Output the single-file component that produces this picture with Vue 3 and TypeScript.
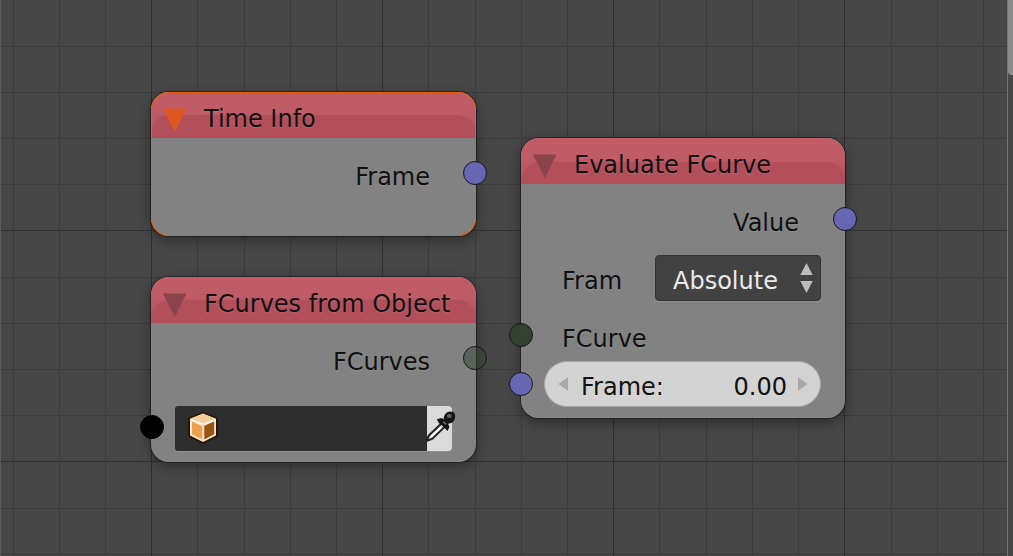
<script setup lang="ts">
interface GridLine {
  at: number
  major: boolean
}

const columns: GridLine[] = [13, 59, 105, 151, 197, 244, 290, 336, 382, 428, 475, 521, 567, 613, 659, 706, 752, 798, 844, 891, 937, 983]
  .map((at, i) => ({ at, major: i % 5 === 3 }))
const rows: GridLine[] = [46, 92, 138, 184, 230, 277, 323, 369, 415, 461, 508, 554]
  .map((at, i) => ({ at, major: i % 5 === 4 }))
</script>

<template>
  <main class="editor">
    <svg class="grid" width="1013" height="556" shape-rendering="crispEdges">
      <rect v-for="r in rows" :key="'r' + r.at" x="0" :y="r.at" width="1013" height="1" :class="{ major: r.major }" />
      <rect v-for="c in columns" :key="'c' + c.at" :x="c.at" y="0" width="1" height="556" :class="{ major: c.major }" />
    </svg>

    <section class="node time selected">
      <header>
        <svg class="fold" viewBox="0 0 24 24"><path d="M0 0.5H23.5L11.8 24Z" /></svg>
        <h2>Time Info</h2>
      </header>
      <p class="output">Frame</p>
      <i class="socket number right"></i>
    </section>

    <section class="node curves">
      <header>
        <svg class="fold" viewBox="0 0 24 24"><path d="M0 0.5H23.5L11.8 24Z" /></svg>
        <h2>FCurves from Object</h2>
      </header>
      <p class="output">FCurves</p>
      <div class="object-field">
        <div class="object-name">
          <svg class="cube" width="32" height="34" viewBox="0 0 32 34">
            <path d="M16 1L31 6.8V25.5L16 33L1 25.5V6.8Z" fill="#2a1503" />
            <path d="M16 2.6L29 7.7V24.4L16 31L3 24.4V7.7Z" fill="#fbe8d2" />
            <path d="M16 3L28 7.5L16 12.6L4 7.5Z" fill="#f5c998" />
            <path d="M5 10.6L15 14.9V28.2L5 23.2Z" fill="#eda04c" />
            <path d="M17.3 14.8L27.2 10.6V23.3L17.3 28.6Z" fill="#965612" />
            <path d="M4 8.6L16 13.6L28 8.6" fill="none" stroke="#fff6ea" stroke-width="1.6" />
            <path d="M16 13V30" stroke="#f7d6b2" stroke-width="1.5" />
          </svg>
        </div>
        <div class="picker">
          <svg class="dropper" width="32" height="34" viewBox="0 0 32 34">
            <path d="M18.2 12.8L5.1 25.2L2.2 31L8.2 28.7L21.3 16Z" fill="#e9e9e9" stroke="#242424" stroke-width="2.2" stroke-linejoin="round" />
            <path d="M17.2 17.3L7 27" stroke="#fff" stroke-width="2" />
            <path d="M12.8 9.2L17.5 8L19.6 9.6C19.8 4.6 22.5 1.6 26.5 1.6C30.5 1.6 32 5 30.8 8.8C29.7 12.4 27 13.4 24.1 13.8L25.4 17L23.5 21L19.4 16.8L14.8 13Z" fill="#151515" />
            <path d="M19.5 11.8L22 14.2" stroke="#777" stroke-width="1.5" />
            <ellipse cx="25.3" cy="6" rx="2.4" ry="2" fill="#666" />
          </svg>
        </div>
      </div>
      <i class="socket curve-out right"></i>
      <i class="socket object left"></i>
    </section>

    <section class="node evaluate">
      <header>
        <svg class="fold" viewBox="0 0 24 24"><path d="M0 0.5H23.5L11.8 24Z" /></svg>
        <h2>Evaluate FCurve</h2>
      </header>
      <p class="output">Value</p>
      <div class="option">
        <span>Fram</span>
        <div class="select">
          <span>Absolute</span>
          <svg width="13" height="30" viewBox="0 0 13 30"><path d="M0.3 12H12.7L6.5 0ZM0.3 18H12.7L6.5 30Z" /></svg>
        </div>
      </div>
      <p class="input">FCurve</p>
      <div class="slider">
        <svg width="10" height="14" viewBox="0 0 10 14"><path d="M10 0V14L0.5 7Z" /></svg>
        <span>Frame:</span>
        <span class="value">0.00</span>
        <svg width="10" height="14" viewBox="0 0 10 14"><path d="M0 0V14L9.5 7Z" /></svg>
      </div>
      <i class="socket number right"></i>
      <i class="socket curve-in left"></i>
      <i class="socket number frame-in left"></i>
    </section>

    <aside class="scrollbar"><div class="thumb"></div></aside>
  </main>
</template>

<style>
html, body { margin: 0; overflow: hidden; background: #474747; }
</style>

<style scoped>
.editor {
  position: relative;
  width: 1013px;
  height: 556px;
  overflow: hidden;
  box-sizing: border-box;
  border-left: 1px solid #5b5b5b;
  background: #474747;
  color: #111;
  font: 24px/28px "DejaVu Sans", sans-serif;
}
.grid { position: absolute; left: -1px; top: 0; fill: #3c3c3c; }
.grid .major { fill: #303030; }
.node {
  position: absolute;
  width: 325px;
  box-sizing: border-box;
  border-radius: 18px;
  background: rgba(132, 132, 132, 0.975);
  box-shadow: 0 0 0 1px rgba(20, 20, 20, 0.6), 0 4px 12px 1px rgba(0, 0, 0, 0.34);
  text-shadow: 0 1px 2px rgba(255, 255, 255, 0.12);
}
.time { left: 150px; top: 92px; height: 144px; }
.curves { left: 150px; top: 277px; height: 185px; }
.evaluate { left: 520px; top: 138px; width: 324px; height: 280px; }
.node::after {
  content: "";
  position: absolute;
  inset: 0;
  border-radius: 18px;
  box-shadow: inset 0 -1px 0 rgba(255, 255, 255, 0.08);
  pointer-events: none;
}
.selected::after { box-shadow: inset 0 0 0 1px #ee6008; }
header {
  position: relative;
  display: flex;
  height: 46px;
  border-radius: 18px 18px 0 0;
  background: linear-gradient(rgba(193, 91, 102, 0.97) 40%, #b6525d 85%);
  overflow: hidden;
}
header::before {
  content: "";
  position: absolute;
  inset: 23px 0 0;
  border-radius: 19px 19px 0 0;
  background: #b34f5a;
}
.evaluate header::before { top: 24px; }
.fold { position: relative; flex: none; width: 24px; height: 24px; margin: 16px 0 0 12px; fill: #8b444b; }
.selected .fold { fill: #df571e; }
h2 { position: relative; margin: 13px 0 0 17px; font-size: 24px; font-weight: 400; line-height: 28px; white-space: nowrap; }
p { margin: 0; }
.output { margin-top: 25px; padding-right: 46px; text-align: right; }
.object-field { display: flex; width: 277px; height: 45px; margin: 30px 0 0 24px; border-radius: 3px; box-shadow: 0 1px 0 #929292; }
.object-name { width: 252px; border-radius: 3px 0 0 3px; background: #2e2e2e; }
.cube { display: block; margin: 5px 0 0 12px; }
.picker { width: 25px; border-radius: 0 4px 4px 0; background: #dadada; }
.dropper { display: block; margin: 4px 0 0 -3px; }
.option { display: flex; align-items: center; justify-content: space-between; height: 46px; margin: 18px 24px 0 41px; }
.option span { padding-top: 6px; }
.select {
  display: flex;
  align-items: center;
  justify-content: space-between;
  box-sizing: border-box;
  width: 166px;
  height: 46px;
  padding: 0 7px 0 17px;
  border: 1px solid #333;
  border-radius: 4px;
  background: #424242;
  color: #e9e9e9;
  box-shadow: 0 1px 0 #929292;
  fill: #bcbcbc;
  text-shadow: none;
}
.input { margin: 24px 0 0 41px; }
.slider {
  display: flex;
  align-items: center;
  box-sizing: border-box;
  width: 277px;
  height: 46px;
  margin: 8px 0 0 23px;
  padding: 0 12px 0 13px;
  border: 1px solid #a8a8a8;
  border-radius: 23px;
  background: #d3d3d3;
  fill: #a8a8a8;
}
.slider span { margin-left: 13px; padding-top: 6px; }
.slider .value { margin: 0 11px 0 auto; }
.socket {
  position: absolute;
  z-index: 1;
  width: 24px;
  height: 24px;
  box-sizing: border-box;
  border: 1px solid #18181c;
  border-radius: 50%;
}
.right { right: -11px; top: 69px; }
.evaluate .right { right: -12px; }
.left { left: -11px; }
.evaluate .left { left: -12px; }
.number { background: #6766b2; }
.object { top: 138px; background: #000; border-color: #000; }
.curve-out { background: rgba(50, 65, 48, 0.5); }
.curve-in { top: 185px; background: #334130; }
.frame-in { top: 234px; }
.scrollbar { position: absolute; z-index: 2; right: 0; top: 0; width: 6px; height: 556px; box-sizing: border-box; border-left: 1px solid #757575; background: #474747; }
.thumb { height: 75px; border-radius: 0 0 0 4px; background: #8d8d8d; }
</style>
